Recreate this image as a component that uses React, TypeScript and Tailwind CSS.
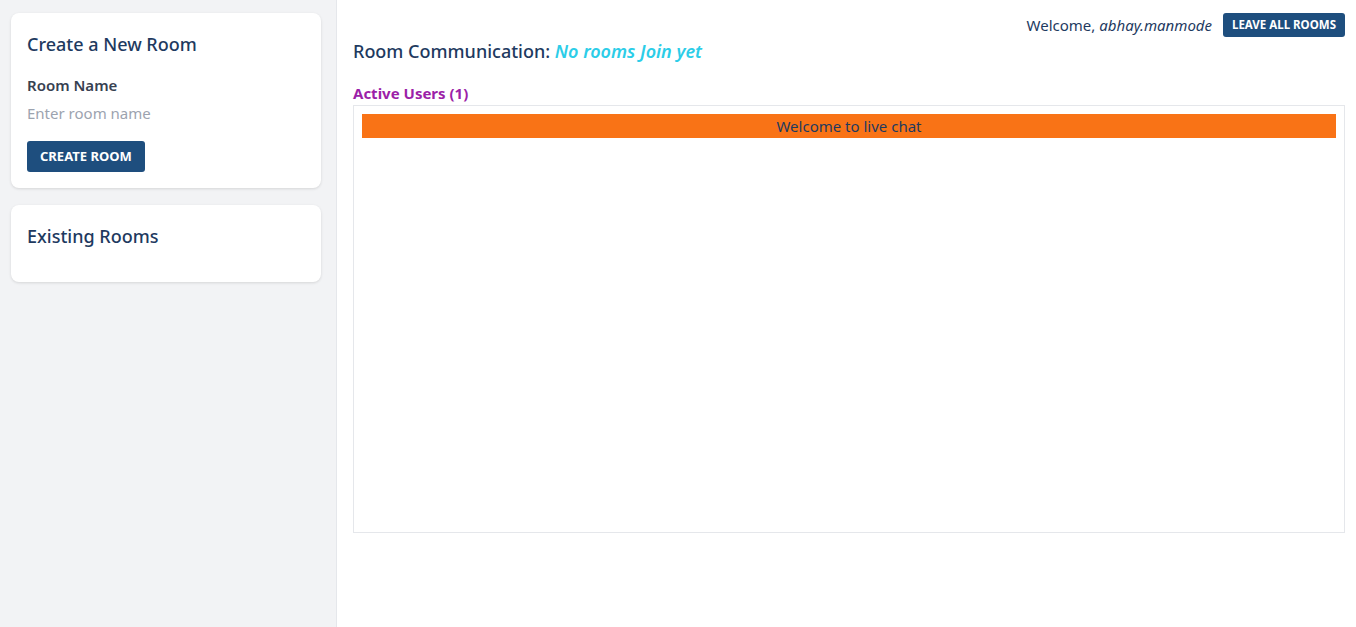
import React, {useState} from "react";

const font = {fontFamily: '"Noto Sans", "Open Sans", sans-serif'};

export default function App() {
  const [roomName, setRoomName] = useState<string>('');

  return (
    <div style={font} className="flex h-[627px] w-full bg-white text-[#1e3a5f]">
      <aside className="w-[337px] shrink-0 bg-[#f2f3f5] border-r border-[#e5e7eb] pl-[11px] pr-[15px] pt-[13px] flex flex-col gap-[17px]">
        <section className="bg-white rounded-lg shadow-[0_1px_3px_rgba(0,0,0,0.12)] px-4 pt-[19px] pb-4">
          <h2 className="text-[18px] leading-[24px] font-medium text-[#1e3a5f]">Create a New Room</h2>
          <label className="block mt-[19px] text-[15px] leading-5 font-semibold text-[#374151]">Room Name</label>
          <input
            value={roomName}
            onChange={(e) => setRoomName(e.target.value)}
            placeholder="Enter room name"
            className="block w-full mt-2 text-[15px] leading-5 outline-none placeholder:text-[#9ca3af]"
          />
          <button className="mt-[18px] bg-[#1e4e7e] text-white text-[13px] font-bold px-[13px] h-[31px] rounded-[3px]">CREATE ROOM</button>
        </section>
        <section className="bg-white rounded-lg shadow-[0_1px_3px_rgba(0,0,0,0.12)] px-4 pt-[19px] pb-[34px]">
          <h2 className="text-[18px] leading-[24px] font-medium text-[#1e3a5f]">Existing Rooms</h2>
        </section>
      </aside>
      <main className="flex-1 pl-4 pr-[11px] pt-[13px]">
        <div className="flex justify-end items-center gap-[11px] h-6">
          <span className="text-[15px] text-[#1e3a5f]">Welcome, <i>abhay.manmode</i></span>
          <button className="bg-[#1e4e7e] text-white text-[11.5px] font-bold px-[9px] h-6 rounded-[3px]">LEAVE ALL ROOMS</button>
        </div>
        <h1 className="text-[18px] leading-6 mt-[2px] font-medium">
          Room Communication: <i className="font-semibold text-[#2ccde8]">No rooms Join yet</i>
        </h1>
        <h3 className="mt-[18px] text-[15px] leading-6 font-bold text-[#9c1fa8]">Active Users (1)</h3>
        <div className="border border-[#e5e7eb] h-[428px] p-2">
          <div className="bg-[#f97316] text-center text-[15px] leading-6 text-[#1e3a5f]">Welcome to live chat</div>
        </div>
      </main>
    </div>
  );
}
